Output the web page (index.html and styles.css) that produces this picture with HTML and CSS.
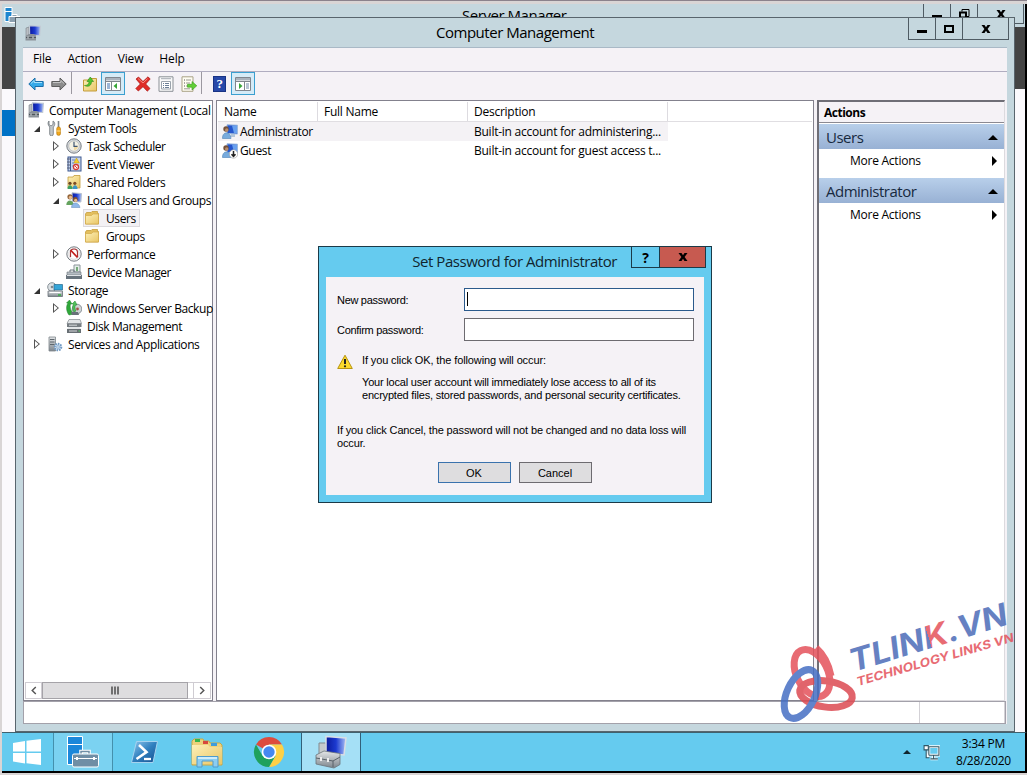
FILE: index.html
```html
<!DOCTYPE html>
<html lang="en">
  <head>
    <meta charset="UTF-8" />
    <meta name="viewport" content="width=device-width, initial-scale=1.0" />
    <title>Computer Management</title>
    <link rel="stylesheet" href="styles.css">
  </head>
  <body>
    <!-- icons -->
    <svg class="sprite" xmlns="http://www.w3.org/2000/svg">
      <defs>
        <linearGradient id="screen" x1="0" y1="0" x2="1" y2="0">
          <stop offset="0" stop-color="#0b1a9c" />
          <stop offset=".5" stop-color="#1c3ad0" />
          <stop offset="1" stop-color="#a9c0f5" />
        </linearGradient>
        <linearGradient id="folderFill" x1="0" y1="0" x2="1" y2="1">
          <stop offset="0" stop-color="#fdf0b8" />
          <stop offset="1" stop-color="#e9c666" />
        </linearGradient>
        <linearGradient id="metal" x1="0" y1="0" x2="0" y2="1">
          <stop offset="0" stop-color="#e4e6e8" />
          <stop offset="1" stop-color="#7d858c" />
        </linearGradient>
        <linearGradient id="psFill" x1="0" y1="0" x2="1" y2="1">
          <stop offset="0" stop-color="#8fc8ee" />
          <stop offset=".5" stop-color="#2f7fbe" />
          <stop offset="1" stop-color="#174f8f" />
        </linearGradient>
      </defs>
      <symbol id="computer" viewBox="0 0 16 16">
        <path d="M1 3l3-1v9H1z" fill="#b9bec3" stroke="#7b8288" stroke-width=".6" />
        <path d="M4.500 .8l11 .4-.8 9.300-10-.6z" fill="url(#screen)" stroke="#c3cbd4" stroke-width="1.100" />
        <path d="M8 10.500h3v1.500H8z" fill="#9aa2aa" />
        <path d="M1.500 10.500l2-1.500h5l2.500 1.500v5H.5v-4z" fill="#8b9298" />
        <path d="M1 12.500h10" stroke="#4e565c" />
        <path d="M3 11.500v2M8 11.500v2" stroke="#dfe2e4" />
      </symbol>
      <symbol id="tools" viewBox="0 0 16 16">
        <path d="M2 1v3.500l2 1.500 2-1.500V1c2 1 2.500 4 .3 6V14a1.600 1.600 0 0 1-3.600 0V7C.5 5 .8 2 2 1z" fill="#c2c7cb" stroke="#70777c" stroke-width=".8" />
        <path d="M11.500 1v6" stroke="#7e858a" stroke-width="1.600" />
        <rect x="9.800" y="7" width="3.600" height="8.300" rx="1.500" fill="#f2a81c" stroke="#b87707" stroke-width=".7" />
        <path d="M9.500 11h4" stroke="#fbe1a0" />
      </symbol>
      <symbol id="clock" viewBox="0 0 16 16">
        <circle cx="8" cy="8" r="7.200" fill="#d9dcdf" stroke="#777d83" />
        <circle cx="8" cy="8" r="5.300" fill="#f4f1e4" stroke="#a7abaf" stroke-width=".6" />
        <path d="M8 8h4A4 4 0 0 1 8 12z" fill="#f0d9a4" />
        <path d="M8 3.800V8.300H11.500" fill="none" stroke="#3e5572" stroke-width="1.200" />
      </symbol>
      <symbol id="event" viewBox="0 0 16 16">
        <rect x="2" y="1" width="13" height="14" fill="#c8d5ec" stroke="#3d5890" />
        <path d="M4.500 1v14" stroke="#3d5890" />
        <path d="M1 3h3M1 6h3M1 9h3M1 12h3" stroke="#56617a" />
        <path d="M6 4h3M6 7h2M6 10h2" stroke="#6887bd" />
        <path d="M10.500 2l2.800 5H7.800z" fill="#f7cf2e" stroke="#b99009" stroke-width=".5" />
        <circle cx="10" cy="11" r="2.500" fill="#fff" stroke="#d73a34" stroke-width="1.300" />
        <path d="M9 10l2 2" stroke="#d73a34" />
      </symbol>
      <symbol id="shared" viewBox="0 0 16 16">
        <path d="M2 3h5l1-1.500h6V14H2z" fill="url(#folderFill)" stroke="#c49c3a" stroke-width=".8" />
        <circle cx="4" cy="9.300" r="1.600" fill="#6b4423" />
        <circle cx="8.800" cy="9.300" r="1.600" fill="#7d4c25" />
        <path d="M1.500 15c0-5 5-5 5 0z" fill="#3da060" />
        <path d="M6.500 15c0-5 5-5 5 0z" fill="#3b94c5" />
      </symbol>
      <symbol id="users" viewBox="0 0 16 16">
        <path d="M6 .8l9.500.7-.6 8.500-8.500-.5z" fill="url(#screen)" stroke="#b9c2cc" />
        <circle cx="4" cy="4.800" r="2.600" fill="#94653a" />
        <circle cx="4.500" cy="5.500" r="1.700" fill="#e8b98c" />
        <path d="M.3 13c0-6 7-6 7.500 0z" fill="#65a35f" />
        <circle cx="9.300" cy="7.500" r="2.400" fill="#845128" />
        <circle cx="9.700" cy="8.300" r="1.600" fill="#e8b98c" />
        <path d="M5.500 15.500c0-6 7.500-6 8.500 0z" fill="#8fb8e8" stroke="#5c86ba" stroke-width=".5" />
      </symbol>
      <symbol id="folder" viewBox="0 0 16 16">
        <path d="M1.500 4l1-1.500h4.500L8 1.500h5.500v2H14.500V14H1.500z" fill="#e3bf5e" stroke="#c79e3b" stroke-width=".8" />
        <path d="M1.500 5.500h6L9 4h5.500v10h-13z" fill="url(#folderFill)" stroke="#d2ab4b" stroke-width=".7" />
      </symbol>
      <symbol id="perf" viewBox="0 0 16 16">
        <circle cx="8" cy="8" r="7.200" fill="#f6f6f6" stroke="#777d83" />
        <circle cx="8" cy="8" r="5.300" fill="#fff" stroke="#c9cdd0" stroke-width=".6" />
        <path d="M4.500 11V6.500A3.500 3.500 0 0 1 11.500 6.500V11" fill="none" stroke="#a33" stroke-width="1.200" />
        <path d="M4.500 4l7 7.500" stroke="#c4201d" stroke-width="1.700" />
      </symbol>
      <symbol id="device" viewBox="0 0 16 16">
        <path d="M8 1h6v7H8z" fill="#e5eee9" stroke="#8c959b" />
        <path d="M10 3h2v4h-2z" fill="#75a978" />
        <path d="M1 8h14v3H1z" fill="#b5bcc2" stroke="#69727a" stroke-width=".6" />
        <path d="M0 11h16v4H0z" fill="#68737c" />
        <path d="M4 8V6h4v2" fill="none" stroke="#69727a" />
        <path d="M1 11.500h14" stroke="#dfe3e6" />
      </symbol>
      <symbol id="storage" viewBox="0 0 16 16">
        <circle cx="5" cy="5" r="4.300" fill="#dbe1e4" stroke="#8b9399" />
        <circle cx="5" cy="5" r="1.300" fill="#7f888e" />
        <path d="M7 2.500h8.500V8H7z" fill="#35a5d8" stroke="#256b90" stroke-width=".7" />
        <path d="M1 9h14.500v5.500H1z" fill="url(#metal)" stroke="#6a7278" stroke-width=".8" />
        <path d="M2.500 10.500h11" stroke="#fff" />
        <path d="M11 13h3" stroke="#2faf3a" stroke-width="1.400" />
      </symbol>
      <symbol id="backup" viewBox="0 0 16 16">
        <circle cx="11" cy="9" r="4.800" fill="#cfd3d6" stroke="#7b8389" stroke-width=".8" />
        <circle cx="11.500" cy="9" r="1.400" fill="#a35148" />
        <path d="M3 15C0 11 0 6 2 3L.5 3 3.500 0 6 4H4.500C3.500 8 5 11 8 14z" fill="#30a83a" stroke="#1d7d28" stroke-width=".5" />
        <path d="M8 12C6 9 6.500 6 7.500 4L6 4 9 1l2 4H9.500C8.500 7 9 9 10 11z" fill="#51c25a" stroke="#1d7d28" stroke-width=".5" />
        <path d="M5 12h7l1 3H6z" fill="#687179" />
      </symbol>
      <symbol id="disk" viewBox="0 0 16 16">
        <path d="M3 1.500h11l1.500 4H1z" fill="#e2e5e7" stroke="#81888d" stroke-width=".7" />
        <path d="M1 5.500h14.500V9H1z" fill="#767d82" />
        <path d="M2.500 9h11l1.500 2H1z" fill="#e2e5e7" />
        <path d="M1 11h14v4H1z" fill="#686f74" />
        <path d="M3 7.200h8M3 13h8" stroke="#d7dadc" />
        <path d="M12.500 13h1.500" stroke="#5bd35f" />
      </symbol>
      <symbol id="services" viewBox="0 0 16 16">
        <path d="M2 1h6.500v14H2z" fill="url(#metal)" stroke="#7e868c" stroke-width=".8" />
        <path d="M3 3.500h4.500M3 6h4.500M3 8.500h4.500" stroke="#5e666c" />
        <circle cx="11" cy="11" r="3.300" fill="#cfe1f3" stroke="#7099c2" stroke-width="2" stroke-dasharray="1.500 1" />
        <circle cx="11" cy="11" r="1.300" fill="#fff" stroke="#7099c2" stroke-width=".8" />
      </symbol>
      <symbol id="user" viewBox="0 0 16 16">
        <path d="M5 .8l10.500.4V10L5 9.500z" fill="#2455cc" stroke="#9db9dc" />
        <path d="M10 1.500l5 .2V9l-3 .2z" fill="#68a0ee" />
        <path d="M9 10h4v3H8z" fill="#b3c5d8" />
        <circle cx="4" cy="5" r="2.700" fill="#72513a" />
        <circle cx="4.700" cy="6" r="1.700" fill="#b98d6b" />
        <path d="M.5 14.500C0 7 8.500 7 9 14.500z" fill="#77abdd" stroke="#4e82b7" stroke-width=".6" />
      </symbol>
      <symbol id="guest" viewBox="0 0 16 16">
        <use href="#user" />
        <circle cx="11.500" cy="11" r="4.200" fill="#fff" stroke="#999" stroke-width=".6" />
        <path d="M11.500 8v5.500M9.500 11.300l2 2.200 2-2.200" fill="none" stroke="#222" stroke-width="1.500" />
      </symbol>
      <symbol id="back" viewBox="0 0 16 16">
        <path d="M.8 8L7 2v3.500h8.200v5H7V14z" fill="#35a9e8" stroke="#1a6ea9" />
        <path d="M3 7.500L6.200 4.500v2H14" fill="none" stroke="#a8e1fb" />
      </symbol>
      <symbol id="forward" viewBox="0 0 16 16">
        <path d="M15.200 8L9 2v3.500H.8v5H9V14z" fill="#8c8c8c" stroke="#5d5d5d" />
        <path d="M13 7.500L9.800 4.500v2H2" fill="none" stroke="#c4c4c4" />
      </symbol>
      <symbol id="upFolder" viewBox="0 0 16 16">
        <path d="M1.500 4h5l1.500-1.500h6.500V15h-13z" fill="url(#folderFill)" stroke="#c49c3a" />
        <path d="M2.500 9.500c3.500 0 4.500-2 4.500-4H5l3.300-4.500L11.500 5.500h-2c0 4-3 6-7 4z" fill="#54c32c" stroke="#2d8c17" stroke-width=".6" />
      </symbol>
      <symbol id="paneLeft" viewBox="0 0 16 16">
        <path d="M.5 1.500h15v13H.5z" fill="#fff" stroke="#80868e" />
        <path d="M1 2h14v2.500H1z" fill="#aab2bc" />
        <path d="M1 5.500h14M6.500 5.500v9" stroke="#80868e" />
        <path d="M2 8h3M2 10h3M2 12h3" stroke="#3a6cad" />
        <path d="M12 7v6L8.500 10z" fill="#37a637" />
      </symbol>
      <symbol id="paneRight" viewBox="0 0 16 16">
        <path d="M.5 1.500h15v13H.5z" fill="#fff" stroke="#80868e" />
        <path d="M1 2h14v2.500H1z" fill="#aab2bc" />
        <path d="M1 5.500h14M9.500 5.500v9" stroke="#80868e" />
        <path d="M11 8h3M11 10h3M11 12h3" stroke="#7188a8" />
        <path d="M4 7v6L7.500 10z" fill="#37a637" />
      </symbol>
      <symbol id="delete" viewBox="0 0 16 16">
        <path d="M1 3l2.500-2L8 5.500 13 .8 15.200 3 10.700 8l4.300 4.500-2.700 2.700L8 10.700 3.300 15 .8 12.500 5.300 8z" fill="#e02c28" stroke="#a81512" stroke-width=".7" />
        <path d="M3 2.500l5 4.500 4.500-4.300" fill="none" stroke="#f78a80" />
      </symbol>
      <symbol id="props" viewBox="0 0 16 16">
        <path d="M1 .8h14v14.500H1z" fill="#fafafa" stroke="#8b9096" />
        <path d="M3 2.700h10" stroke="#a5abb2" />
        <path d="M3.500 5.500h9V13h-9z" fill="#fff" stroke="#9ba3ac" />
        <path d="M5 7.500h1M7 7.500h4M5 9.500h1M7 9.500h4M5 11.500h1M7 11.500h4" stroke="#6c7f96" />
      </symbol>
      <symbol id="export" viewBox="0 0 16 16">
        <path d="M1 .8h11v14.500H1z" fill="#fffdf2" stroke="#a9a386" />
        <path d="M3 4h1M3 7h1M3 10h1" stroke="#555" />
        <path d="M5 4h5M5 7h4M5 10h3M3 12.800h6" stroke="#9a9a90" />
        <path d="M6.500 8.300H11V5.500l4.800 4.300L11 14v-2.800H6.500z" fill="#62cf37" stroke="#359b1d" stroke-width=".6" />
      </symbol>
      <symbol id="warning" viewBox="0 0 16 16">
        <path d="M8 1.200L15.300 14.500H.7z" fill="#fbd92b" stroke="#b79412" stroke-linejoin="round" />
        <path d="M8 5v5" stroke="#222" stroke-width="2" />
        <circle cx="8" cy="12.300" r="1.100" fill="#222" />
      </symbol>
      <symbol id="winMin" viewBox="0 0 12 12">
        <path d="M1 8.500h10" stroke="#000" stroke-width="3" />
      </symbol>
      <symbol id="winMax" viewBox="0 0 12 12">
        <path d="M2 3h8v6H2z" fill="none" stroke="#000" stroke-width="2" />
      </symbol>
      <symbol id="winRestore" viewBox="0 0 12 12">
        <path d="M4 3.500V1.500h7v7H9" fill="none" stroke="#000" />
        <path d="M2 4.500h6v5H2z" fill="none" stroke="#000" stroke-width="2" />
      </symbol>
      <symbol id="winClose" viewBox="0 0 12 12">
        <path d="M1.500 2h3L6 4.300 7.500 2h3L7.600 6l2.900 4h-3L6 7.700 4.500 10h-3l2.900-4z" />
      </symbol>
    </svg>

    <main class="desktop">
      <!-- Server Manager, behind -->
      <section class="server-window">
        <header class="server-title">
          <svg class="server-icon" viewBox="0 0 16 16">
            <path d="M1 .5h7v14H1z" fill="#1e86cf" stroke="#fff" />
            <path d="M1 4.500h7" stroke="#fff" />
            <path d="M5 9.500h11v6H5zM8 9V7.500h5V9" fill="#8ba0b0" stroke="#fff" />
          </svg>
          <span class="server-name">Server Manager</span>
          <div class="window-buttons server-buttons">
            <span><svg><use href="#winMin" /></svg></span>
            <span><svg><use href="#winRestore" /></svg></span>
            <span class="wide"><svg><use href="#winClose" /></svg></span>
          </div>
        </header>
        <div class="server-band"></div>
        <div class="server-nav"></div>
      </section>

      <!-- Computer Management -->
      <section class="window">
        <header class="title-bar">
          <svg class="icon title-icon"><use href="#computer" /></svg>
          <h1>Computer Management</h1>
          <div class="window-buttons">
            <span><svg><use href="#winMin" /></svg></span>
            <span><svg><use href="#winMax" /></svg></span>
            <span class="wide"><svg><use href="#winClose" /></svg></span>
          </div>
        </header>
        <div class="client">
          <nav class="menu">
            <span>File</span><span>Action</span><span>View</span><span>Help</span>
          </nav>
          <div class="toolbar">
            <span class="tool"><svg class="icon"><use href="#back" /></svg></span>
            <span class="tool"><svg class="icon"><use href="#forward" /></svg></span>
            <span class="separator"></span>
            <span class="tool"><svg class="icon"><use href="#upFolder" /></svg></span>
            <span class="tool pressed"><svg class="icon"><use href="#paneLeft" /></svg></span>
            <span class="tool delete"><svg class="icon"><use href="#delete" /></svg></span>
            <span class="tool"><svg class="icon"><use href="#props" /></svg></span>
            <span class="tool"><svg class="icon"><use href="#export" /></svg></span>
            <span class="separator"></span>
            <span class="tool"><b class="help">?</b></span>
            <span class="tool pressed"><svg class="icon"><use href="#paneRight" /></svg></span>
          </div>

          <div class="panes">
            <aside class="tree-pane">
              <ul class="tree">
                <li class="root"><svg class="icon"><use href="#computer" /></svg><span>Computer Management (Local</span></li>
                <li class="l1 open"><i></i><svg class="icon"><use href="#tools" /></svg><span>System Tools</span></li>
                <li class="l2 closed"><i></i><svg class="icon"><use href="#clock" /></svg><span>Task Scheduler</span></li>
                <li class="l2 closed"><i></i><svg class="icon"><use href="#event" /></svg><span>Event Viewer</span></li>
                <li class="l2 closed"><i></i><svg class="icon"><use href="#shared" /></svg><span>Shared Folders</span></li>
                <li class="l2 open"><i></i><svg class="icon"><use href="#users" /></svg><span>Local Users and Groups</span></li>
                <li class="l3"><div class="selected"><svg class="icon"><use href="#folder" /></svg><span>Users</span></div></li>
                <li class="l3"><svg class="icon"><use href="#folder" /></svg><span>Groups</span></li>
                <li class="l2 closed"><i></i><svg class="icon"><use href="#perf" /></svg><span>Performance</span></li>
                <li class="l2"><i></i><svg class="icon"><use href="#device" /></svg><span>Device Manager</span></li>
                <li class="l1 open"><i></i><svg class="icon"><use href="#storage" /></svg><span>Storage</span></li>
                <li class="l2 closed"><i></i><svg class="icon"><use href="#backup" /></svg><span>Windows Server Backup</span></li>
                <li class="l2"><i></i><svg class="icon"><use href="#disk" /></svg><span>Disk Management</span></li>
                <li class="l1 closed"><i></i><svg class="icon"><use href="#services" /></svg><span>Services and Applications</span></li>
              </ul>
              <div class="scrollbar">
                <span class="scroll-button"><svg viewBox="0 0 8 10"><path d="M6 1L2 5l4 4" /></svg></span>
                <span class="thumb"><svg viewBox="0 0 8 8"><path d="M1 0v8M4 0v8M7 0v8" /></svg></span>
                <span class="scroll-button"><svg viewBox="0 0 8 10"><path d="M2 1l4 4-4 4" /></svg></span>
              </div>
            </aside>

            <section class="list-pane">
              <div class="list-row list-head"><span>Name</span><span>Full Name</span><span>Description</span></div>
              <div class="list-row highlight">
                <span class="name"><svg class="icon"><use href="#user" /></svg>Administrator</span>
                <span></span>
                <span>Built-in account for administering...</span>
              </div>
              <div class="list-row">
                <span class="name"><svg class="icon"><use href="#guest" /></svg>Guest</span>
                <span></span>
                <span>Built-in account for guest access t...</span>
              </div>
            </section>

            <aside class="actions-pane">
              <h2>Actions</h2>
              <div class="group">Users<i></i></div>
              <div class="more"><span>More Actions</span><i></i></div>
              <div class="group">Administrator<i></i></div>
              <div class="more"><span>More Actions</span><i></i></div>
            </aside>
          </div>
          <footer class="status"><span></span><span></span></footer>
        </div>
      </section>

      <!-- Set Password dialog -->
      <section class="dialog">
        <header class="dialog-title">
          <h1>Set Password for Administrator</h1>
          <div class="dialog-buttons">
            <span>?</span>
            <span class="close"><svg><use href="#winClose" /></svg></span>
          </div>
        </header>
        <form class="dialog-body">
          <div class="field">
            <label>New password:</label>
            <div class="input focused"><i></i></div>
          </div>
          <div class="field">
            <label>Confirm password:</label>
            <div class="input"></div>
          </div>
          <div class="warning">
            <svg class="icon"><use href="#warning" /></svg>
            <div>
              <p class="lead">If you click OK, the following will occur:</p>
              <p>Your local user account will immediately lose access to all of its<br />encrypted files, stored passwords, and personal security certificates.</p>
            </div>
          </div>
          <p class="cancel-note">If you click Cancel, the password will not be changed and no data loss will<br />occur.</p>
          <div class="buttons">
            <button type="button" class="default">OK</button>
            <button type="button">Cancel</button>
          </div>
        </form>
      </section>

      <!-- watermark -->
      <svg class="watermark" viewBox="0 0 247 140">
        <defs>
          <linearGradient id="kFill" gradientUnits="userSpaceOnUse" x1="0" y1="0" x2="160" y2="0">
            <stop offset=".515" stop-color="#4c6cb8" />
            <stop offset=".515" stop-color="#e4525b" />
          </linearGradient>
        </defs>
        <g fill="none" stroke-width="7">
          <ellipse cx="32" cy="78" rx="15.500" ry="25" transform="rotate(-27 32 78)" stroke="#e4525b" />
          <ellipse cx="46" cy="99" rx="26.500" ry="13" transform="rotate(8 46 99)" stroke="#dc4a52" />
          <ellipse cx="21" cy="99" rx="14" ry="26" transform="rotate(25 21 99)" stroke="#466fc4" />
          <path d="M36 53c8 7 13 18 15 28" stroke="#e4525b" />
        </g>
        <g transform="translate(73 77) rotate(-17)">
          <text class="brand" textLength="164" lengthAdjust="spacingAndGlyphs">TLIN<tspan fill="url(#kFill)">K</tspan>.VN</text>
        </g>
        <g transform="translate(78 91) rotate(-16)">
          <text class="tagline" textLength="163" lengthAdjust="spacingAndGlyphs">TECHNOLOGY LINKS VN</text>
        </g>
      </svg>

      <footer class="taskbar">
        <span class="start">
          <svg viewBox="0 0 28 26">
            <path d="M0 4l12-2v10.500H0zM13.500 1.700L28 0v12.500H13.500zM0 14h12v10.500L0 22.500zM13.500 14H28v12l-14.500-1.700z" fill="#fff" />
          </svg>
        </span>
        <div class="tasks">
          <span class="task running">
            <svg viewBox="0 0 34 34">
              <path d="M1.500 1.500h15v28h-15z" fill="#1b87da" stroke="#fff" />
              <path d="M1.500 9.500h15" stroke="#fff" />
              <path d="M15 19V16.500h8V19" fill="none" stroke="#fff" stroke-width="3.500" />
              <path d="M15 19V16.500h8V19" fill="none" stroke="#6f8ea5" stroke-width="1.500" />
              <rect x="6.500" y="19" width="26" height="13" rx="1.500" fill="#6f8ea5" stroke="#fff" />
              <path d="M8 23.500h23" stroke="#fff" />
              <path d="M11 22v3M28 22v3" stroke="#fff" stroke-width="2" />
            </svg>
          </span>
          <span class="task">
            <svg viewBox="0 0 34 34">
              <path d="M8.500 6.500h21l-4.500 21H3.500z" fill="url(#psFill)" stroke="#a6d3ef" />
              <path d="M11 10l7.500 7-10 7" fill="none" stroke="#fff" stroke-width="2.600" />
              <path d="M16 24h7" stroke="#fff" stroke-width="2.300" />
            </svg>
          </span>
          <span class="task">
            <svg viewBox="0 0 34 34">
              <path d="M2 6l2-2h9l1 2h5l1 2h10l2 2v20H2z" fill="#edd27c" stroke="#c9a745" />
              <path d="M5 4h5v3H5z" fill="#39b54a" />
              <path d="M13 6h5v3h-5z" fill="#d8483d" />
              <path d="M21 8h6v3h-6z" fill="#3f9ddb" />
              <path d="M2 10h16l2 2h12v17H2z" fill="url(#folderFill)" />
              <path d="M7 32V21.500h21V32h-5v-6H12v6z" fill="#8ccdf0" stroke="#4e9bcd" />
              <path d="M8 23h19" stroke="#e6f7ff" stroke-width="1.500" />
            </svg>
          </span>
          <span class="task">
            <svg viewBox="0 0 34 34">
              <path d="M17 17L4 9.500A15 15 0 0 1 30 9.500H17z" fill="#dd4b3e" />
              <path d="M17 9.500H30A15 15 0 0 1 17 32l6.500-11.200z" fill="#fdd045" />
              <path d="M4 9.500A15 15 0 0 0 17 32l6.500-11.200L17 24l-6.500-3.200z" fill="#1fa15d" />
              <circle cx="17" cy="17" r="7.300" fill="#fff" />
              <circle cx="17" cy="17" r="5.700" fill="#4688f1" />
            </svg>
          </span>
          <span class="task active">
            <svg viewBox="0 0 34 34">
              <path d="M5 8h7v14H5z" fill="#c5cacc" stroke="#81898e" />
              <path d="M12 1.500l20 1.500-2 17-18-2z" fill="url(#screen)" stroke="#d9dee5" stroke-width="1.500" />
              <path d="M21 19h4v4h-4z" fill="#aab1b6" />
              <path d="M2 20l8-4 16 2.500v11L20 33 2 29z" fill="url(#metal)" stroke="#697279" stroke-width=".8" />
              <path d="M2 23l17 3 7-4M19 26v6" fill="none" stroke="#596168" />
              <path d="M7 22v4M14 23v4" stroke="#eee" stroke-width="2" />
            </svg>
          </span>
        </div>
        <div class="tray">
          <i></i>
          <svg viewBox="0 0 16 16">
            <path d="M5.500 2.500h9.500v8H5.500zM10 10.500v3M7 14h7" fill="none" stroke="#fff" stroke-width="2.600" />
            <path d="M5.500 2.500h9.500v8H5.500zM10 10.500v3M7 14h7" fill="none" stroke="#2f5564" />
            <path d="M1 1.500h4v4H1zM3 5.500V13h3" fill="#fff" stroke="#2f5564" />
          </svg>
          <div class="clock"><span>3:34 PM</span><span>8/28/2020</span></div>
        </div>
      </footer>
    </main>
  </body>
</html>
```
FILE: styles.css
```css
*,
*::after,
*::before {
  box-sizing: border-box;
}

body {
  margin: 0;
  font-family: 'Open Sans', sans-serif;
  font-size: 12px;
  letter-spacing: -0.25px;
  color: #000;
}

h1,
h2,
p,
ul {
  margin: 0;
  padding: 0;
  font-weight: normal;
}

.sprite {
  position: absolute;
  width: 0;
  height: 0;
}

.icon {
  width: 16px;
  height: 16px;
  flex: none;
}

.desktop {
  position: relative;
  width: 1027px;
  height: 775px;
  overflow: hidden;
  background-color: #d9d5d5;
  border-top: 1px solid #8b828c;
}

/* Server Manager */
.server-window {
  position: absolute;
  left: 2px;
  top: 3px;
  width: 1025px;
  height: 769px;
  background-color: #fbf9fc;
  border-right: 2px solid #000;
}

.server-title {
  display: flex;
  height: 23px;
  background-color: #c5d7de;
}

.server-icon {
  width: 16px;
  height: 16px;
  margin: 3px 0 0 2px;
}

.server-name {
  margin-left: 442px;
  font-size: 15px;
  line-height: 23px;
  letter-spacing: -0.45px;
}

.server-band {
  height: 62px;
  background-color: #444;
}

.server-nav {
  width: 20px;
  height: 26px;
  margin-top: 21px;
  background-color: #0072c6;
}

.window-buttons {
  display: flex;
  height: 22px;
  border: 1px solid #4f5b63;
  border-top: none;
}

.window-buttons span {
  display: flex;
  align-items: center;
  justify-content: center;
  width: 27px;
  border-right: 1px solid #4f5b63;
}

.window-buttons .wide {
  width: 45px;
  border-right: none;
}

.window-buttons svg,
.dialog-buttons svg {
  width: 12px;
  height: 12px;
}

.server-buttons {
  height: 20px;
  margin-left: auto;
  margin-right: 1px;
}

/* main window */
.window {
  position: absolute;
  left: 15px;
  top: 16px;
  width: 1000px;
  height: 715px;
  display: flex;
  flex-direction: column;
  padding: 0 7px 7px;
  background-color: #c5d7de;
  border: 1px solid #59656d;
}

.title-bar {
  display: flex;
  align-items: flex-start;
  height: 29px;
  flex: none;
}

.title-bar h1 {
  margin-left: 395px;
  font-size: 15px;
  line-height: 29px;
  letter-spacing: -0.48px;
}

.title-icon {
  margin: 7px 0 0 2px;
}

.title-bar .window-buttons {
  margin-left: auto;
  margin-right: -2px;
}

.client {
  flex: 1;
  display: flex;
  flex-direction: column;
  background-color: #f5f2f6;
  border-top: 1px solid #a9b9c6;
}

.menu {
  display: flex;
  gap: 16px;
  height: 23px;
  padding-left: 10px;
  line-height: 22px;
  letter-spacing: -0.15px;
  flex: none;
}

.toolbar {
  display: flex;
  height: 30px;
  padding-left: 1px;
  border-top: 1px solid #b0adc0;
  flex: none;
}

.tool {
  display: flex;
  align-items: center;
  justify-content: center;
  width: 23px;
  height: 23px;
}

.pressed {
  width: 24px;
  background-color: #d5ebf7;
  border: 1px solid #3a9fd0;
}

.separator {
  width: 1px;
  height: 22px;
  margin: 0 6px 0 1px;
  background-color: #9b98a0;
}

.delete {
  margin-left: 6px;
}

.help {
  width: 13px;
  height: 16px;
  background-color: #2748a8;
  color: #fff;
  font: bold 13px/16px 'Liberation Serif', serif;
  text-align: center;
  box-shadow: inset 0 0 0 1px #183384;
}

.panes {
  display: flex;
  height: 601px;
  margin-top: -1px;
  flex: none;
}

.tree-pane {
  display: flex;
  flex-direction: column;
  justify-content: space-between;
  width: 190px;
  margin-right: 3px;
  background-color: #fff;
  border: 1px solid #83818d;
}

.tree {
  list-style: none;
  letter-spacing: -0.4px;
}

.tree li {
  display: flex;
  align-items: center;
  height: 18px;
  padding-left: 4px;
  white-space: nowrap;
}

.tree .root {
  letter-spacing: -0.3px;
}

.tree .icon {
  margin-right: 5px;
}

.tree .l1 {
  padding-left: 8px;
}

.tree .l2 {
  padding-left: 27px;
}

.tree .l3 {
  padding-left: 60px;
}

.tree i {
  width: 10px;
  height: 10px;
  margin-right: 5px;
  flex: none;
}

.open i {
  background-color: #333;
  clip-path: polygon(8px 3px, 8px 9px, 2px 9px);
}

.closed i {
  background-color: #555;
  clip-path: polygon(evenodd, 2px 0, 8px 5px, 2px 10px, 2px 0, 3px 2px, 3px 8px, 6.6px 5px, 3px 2px);
}

.selected {
  display: flex;
  align-items: center;
  height: 18px;
  padding: 0 4px 0 1px;
  margin-left: -1px;
  background-color: #f3f1f4;
  box-shadow: inset 0 0 0 1px #dcdade;
}

.tree .l3 .icon {
  margin-right: 6px;
}

.scrollbar {
  display: flex;
  justify-content: space-between;
  height: 17px;
  margin: 0 1px 1px;
  border: 1px solid #cfccd2;
}

.scrollbar span {
  display: flex;
  align-items: center;
  justify-content: center;
}

.scrollbar svg {
  width: 8px;
  height: 9px;
  fill: none;
  stroke: #555;
  stroke-width: 1.6;
}

.scroll-button {
  width: 16px;
  border-right: 1px solid #cfccd2;
}

.scroll-button:last-child {
  width: 17px;
  border-right: none;
  border-left: 1px solid #cfccd2;
}

.thumb {
  width: 146px;
  margin-right: auto;
  margin-top: -1px;
  margin-bottom: -1px;
  background-color: #dedddf;
  border: 1px solid #a5a3a8;
}

.list-pane {
  width: 598px;
  margin-right: 3px;
  padding: 1px 1px 0;
  background-color: #fff;
  border: 1px solid #83818d;
}

.list-row {
  display: grid;
  grid-template-columns: 100px 150px 200px;
  align-items: center;
  width: 450px;
  height: 19px;
  line-height: 17px;
  white-space: nowrap;
}

.list-row span {
  padding-left: 6px;
}

.list-row .name {
  display: flex;
  align-items: center;
  padding-left: 4px;
  letter-spacing: -0.35px;
}

.list-row .name .icon {
  margin-right: 2px;
}

.list-head {
  width: 100%;
  height: 20px;
  border-bottom: 1px solid #e0dee2;
}

.list-head span {
  line-height: 19px;
  border-right: 1px solid #dddbe0;
}

.highlight {
  background-color: #f4f2f5;
}

.actions-pane {
  flex: 1;
  margin-right: 2px;
  background-color: #fff;
  border: 1px solid #dcdade;
  border-left: 2px solid #6f6e76;
  border-top: 2px solid #6f6e76;
}

.actions-pane h2 {
  height: 21px;
  margin-bottom: 1px;
  padding-left: 5px;
  font-size: 12px;
  font-weight: bold;
  line-height: 21px;
  letter-spacing: -0.5px;
  background-color: #f5f2f6;
  border-bottom: 1px solid #8b8991;
}

.group {
  display: flex;
  align-items: center;
  justify-content: space-between;
  height: 25px;
  padding: 1px 6px 0 7px;
  font-size: 15px;
  letter-spacing: -0.5px;
  color: #17293f;
  background: linear-gradient(#b8cfea, #98b1d4);
}

.group i {
  border: 5px solid transparent;
  border-top: none;
  border-bottom: 5px solid #000;
}

.more {
  display: flex;
  align-items: center;
  justify-content: space-between;
  height: 24px;
  margin-bottom: 5px;
  padding: 0 7px 1px 31px;
}

.more i {
  border: 5px solid transparent;
  border-right: none;
  border-left: 5px solid #000;
}

.status {
  display: flex;
  justify-content: flex-end;
  height: 23px;
  margin-right: 1px;
  background-color: #fff;
  border: 1px solid #a3a1aa;
}

.status span {
  width: 85px;
  border-left: 1px solid #d3d1d6;
}

.status span:last-child {
  width: 1px;
}

/* dialog */
.dialog {
  position: absolute;
  left: 318px;
  top: 245px;
  width: 394px;
  height: 257px;
  display: flex;
  flex-direction: column;
  padding: 0 7px 7px;
  background-color: #65cbef;
  border: 1px solid #1b3a48;
}

.dialog-title {
  display: flex;
  justify-content: flex-end;
  height: 30px;
  flex: none;
}

.dialog-title h1 {
  margin-right: 14px;
  font-size: 15px;
  line-height: 29px;
  letter-spacing: -0.45px;
  color: #10252e;
}

.dialog-buttons {
  display: flex;
  height: 21px;
  margin-right: -2px;
  border: 1px solid #1b3a48;
  border-top: none;
}

.dialog-buttons span {
  display: flex;
  align-items: center;
  justify-content: center;
  width: 27px;
  font-size: 14px;
  font-weight: bold;
}

.dialog-buttons .close {
  width: 46px;
  background-color: #c75a50;
  border-left: 1px solid #1b3a48;
}

.dialog-body {
  flex: 1;
  padding: 11px 10px 0 11px;
  font-family: 'Liberation Sans', sans-serif;
  font-size: 11px;
  line-height: 13px;
  letter-spacing: -0.2px;
  background-color: #f5f2f6;
}

.field {
  display: flex;
  align-items: center;
  justify-content: space-between;
  height: 23px;
  margin-bottom: 7px;
}

.field label {
  padding-top: 1px;
  letter-spacing: -0.3px;
}

.input {
  width: 230px;
  height: 23px;
  padding: 3px 2px;
  background-color: #fff;
  border: 1px solid #6d6b70;
}

.input i {
  display: block;
  width: 1px;
  height: 14px;
  background-color: #000;
}

.focused {
  border-color: #2b5a8c;
}

.warning {
  display: flex;
  gap: 9px;
  margin-top: 13px;
  white-space: nowrap;
}

.lead {
  margin-bottom: 9px;
  letter-spacing: -0.12px;
}

.cancel-note {
  margin-top: 22px;
  letter-spacing: -0.14px;
  white-space: nowrap;
}

.buttons {
  display: flex;
  justify-content: center;
  gap: 8px;
  margin-top: 12px;
  margin-left: -2px;
}

.buttons button {
  width: 73px;
  height: 21px;
  padding: 1px 0 0;
  font: inherit;
  background-color: #dedddf;
  border: 1px solid #6d6b70;
}

.buttons .default {
  border-color: #3a72ad;
}

.watermark {
  position: absolute;
  left: 780px;
  top: 594px;
  width: 247px;
  height: 140px;
  opacity: 0.85;
}

.brand {
  font: bold italic 31px Inter, sans-serif;
  letter-spacing: 0;
  fill: #4c6cb8;
}

.tagline {
  font: bold italic 12px Inter, sans-serif;
  letter-spacing: 0;
  fill: #e4525b;
}

/* taskbar */
.taskbar {
  position: absolute;
  left: 2px;
  top: 731px;
  width: 1025px;
  height: 41px;
  display: flex;
  background-color: #65cbef;
  border-top: 1px solid #40616e;
  border-right: 2px solid #000;
  border-bottom: 2px solid #000;
}

.start {
  width: 51px;
  padding: 6px 0 0 11px;
}

.start svg {
  width: 28px;
  height: 26px;
}

.tasks {
  display: flex;
  gap: 2px;
}

.task {
  display: flex;
  align-items: center;
  justify-content: center;
  width: 60px;
}

.task svg {
  width: 34px;
  height: 34px;
}

.running {
  background-color: #7bd2f1;
  border: 1px solid #4490ad;
  border-width: 0 1px;
}

.active {
  background-color: #a5e0f6;
  border: 1px solid #31607a;
  border-width: 0 1px;
}

.tray {
  display: flex;
  align-items: center;
  margin-left: auto;
  padding-right: 14px;
}

.tray i {
  border: 4px solid transparent;
  border-top: none;
  border-bottom: 4px solid #10252e;
  margin-right: 12px;
}

.tray svg {
  width: 17px;
  height: 17px;
  margin-right: 16px;
}

.clock {
  display: flex;
  flex-direction: column;
  align-items: center;
  line-height: 17px;
  letter-spacing: -0.2px;
}
```
